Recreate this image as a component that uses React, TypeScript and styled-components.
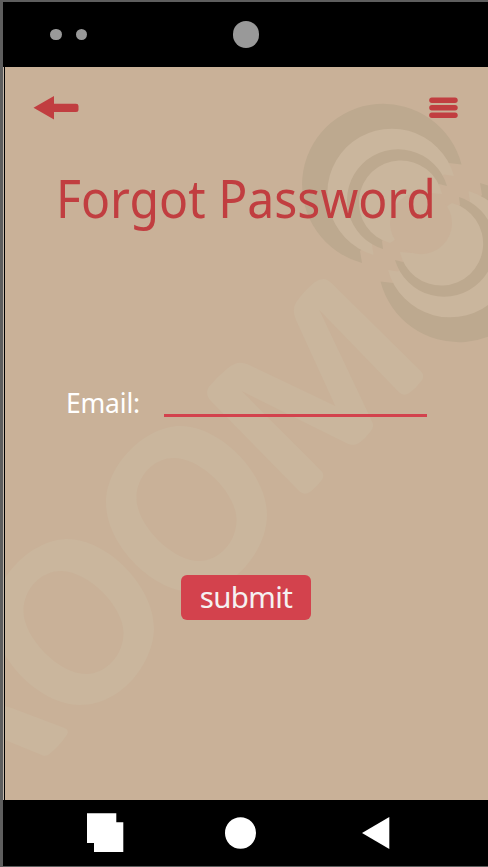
import React from "react";
import styled, { createGlobalStyle } from "styled-components";

const GlobalStyle = createGlobalStyle`
  * { box-sizing: border-box; }
  body { margin: 0; background: #5e5e5e; overflow: hidden; }
`;

const Phone = styled.div`
  width: 488px;
  height: 867px;
  padding: 2px 0 1px 3px;
  background: #5e5e5e;
  display: flex;
  flex-direction: column;
  font-family: "Noto Sans", sans-serif;
`;

const SensorBar = styled.div`
  height: 65px;
  flex: none;
  background: #000;
  display: flex;
  align-items: center;
  padding-left: 47px;
`;

const Dot = styled.span<{ $size: number; $gap: number }>`
  width: ${(p) => p.$size}px;
  height: ${(p) => p.$size}px;
  margin-right: ${(p) => p.$gap}px;
  border-radius: 50%;
  background: #999;
`;

const Screen = styled.main`
  position: relative;
  height: 733px;
  flex: none;
  margin-left: 1px;
  border-left: 1px solid #000;
  box-shadow: -1px 0 0 #c3b7aa;
  background: #c9b198;
  overflow: hidden;
  display: flex;
  flex-direction: column;
`;

const Watermark = styled.svg`
  position: absolute;
  inset: 0;
`;

const Header = styled.header`
  position: relative;
  display: flex;
  justify-content: space-between;
  padding: 28px 30px 0 28px;
  height: 102px;
`;

const IconButton = styled.button`
  border: 0;
  padding: 0;
  background: none;
  height: 26px;
  svg { display: block; }
`;

const Title = styled.h1<{ $stretch: number }>`
  position: relative;
  margin: 0 0 0 50.500px;
  height: 64px;
  font-size: 52.500px;
  line-height: 58px;
  font-weight: 400;
  color: #c13e40;
  white-space: nowrap;
  transform: scaleX(${(p) => p.$stretch});
  transform-origin: 0 0;
`;

const Form = styled.form`
  position: relative;
  display: flex;
  flex-direction: column;
  margin-top: 153px;
`;

const Field = styled.label`
  display: flex;
  align-items: flex-end;
  height: 31px;
  padding-left: 61px;
`;

const LabelText = styled.span`
  width: 98px;
  font-size: 26.5px;
  line-height: 34px;
  height: 31px;
  color: #fff;
  font-weight: 400;
  letter-spacing: -0.2px;
`;

const Input = styled.input`
  width: 262.500px;
  height: 30px;
  border: 0;
  border-bottom: 3px solid #d3424d;
  background: transparent;
  outline: 0;
  padding: 0;
`;

const Submit = styled.button`
  width: 130px;
  height: 45px;
  margin: 158px 0 0 176px;
  padding: 0 0 2px;
  border: 0;
  border-radius: 6px;
  background: #d3424d;
  color: #f5f1f1;
  font: 400 29.500px/43px "Noto Sans", sans-serif;
  letter-spacing: -0.6px;
`;

const NavBar = styled.nav`
  height: 66px;
  flex: none;
  background: #000;
  display: flex;
  align-items: center;
  padding-left: 84px;
  svg { display: block; flex: none; }
`;

const NavItem = styled.span<{ $width: number }>`
  width: ${(p) => p.$width}px;
`;

const RINGS = (
  <>
    <path fill="#bda98f" d="M461.5 164.5A81 81 0 1 0 362 263L360 251L449 163Z" />
    <path fill="#cab69d" d="M454 176A64.5 64.5 0 1 0 373.5 255L372 244L444 174.500Z" />
    <path fill="#bda98f" d="M447 186A51 51 0 1 0 383 249L382 241L439 184Z" />
    <path fill="#cab69d" d="M442 194A42 42 0 1 0 390 243L421 223L430 193Z" />
  </>
);

const LETTER_O =
  "M180 426C221 426 267 474 267 515C267 548 236 592 193 592C152 592 106 544 106 503C106 464 146 426 180 426Z" +
  "M174 458C201 458 236.500 493 236.500 520C236.500 542 219 561 199 561C172 561 136.500 525 136.500 498C136.500 476 154 458 174 458Z";

const LETTER_M =
  "M430 57Q442 57 455 70L722 333Q736 347 724 363Q708 385 688 399Q671 410 657 397L418 150L566 463L578 490Q583 502 571 515Q556 536 537 549Q519 560 500 550L185 393L424 633Q436 645 425 661Q410 681 391 695Q374 708 358 694L92 422Q74 403 86 381Q112 349 145 323Q174 300 203 313L466 438L348 180Q334 149 349 126Q372 93 402 68Q416 57 430 57Z";

const LEG_R =
  "M0 916Q20 919 35 924L192 983Q210 990 200 1006Q175 1042 147 1063Q137 1071 125 1065L0 1014Z";

const BackIcon = () => (
  <svg width="46" height="26" viewBox="0 0 46 26" fill="#c13e40">
    <path d="M0.500 12.700L21 1V8.800H43Q45.500 8.800 45.500 11V14.500Q45.500 17 43 17H21V24.500Z" />
  </svg>
);

const MenuIcon = () => (
  <svg width="29" height="26" viewBox="0 0 29 26" fill="#c13e40">
    <rect x="0.200" y="2.400" width="28.500" height="5.600" rx="2.700" />
    <rect x="0.200" y="9.900" width="28.500" height="5.600" rx="2.700" />
    <rect x="0.200" y="17.400" width="28.500" height="5.600" rx="2.700" />
  </svg>
);

export default function App() {
  return (
    <>
      <GlobalStyle />
      <Phone>
        <SensorBar>
          <Dot $size={11.5} $gap={14} />
          <Dot $size={11.5} $gap={145.5} />
          <Dot $size={26.5} $gap={0} />
        </SensorBar>
        <Screen>
          <Watermark width="483" height="733" viewBox="5 67 483 733" aria-hidden="true">
            {RINGS}
            <g transform="rotate(180 421 223)">{RINGS}</g>
            <circle cx="421" cy="223.200" r="31" fill="#c9b198" />
            <g fill="#cab69d" fillRule="evenodd">
              <path d={LETTER_O} />
              <path d={LETTER_O} transform="translate(-113 113)" />
              <path d={LETTER_M} transform="translate(180 260) scale(.33333)" />
              <path d={LEG_R} transform="translate(0 400) scale(.33333)" />
            </g>
          </Watermark>
          <Header>
            <IconButton aria-label="Back"><BackIcon /></IconButton>
            <IconButton aria-label="Menu"><MenuIcon /></IconButton>
          </Header>
          <Title $stretch={0.917}>Forgot Password</Title>
          <Form onSubmit={(e: React.FormEvent) => e.preventDefault()}>
            <Field>
              <LabelText>Email:</LabelText>
              <Input type="email" />
            </Field>
            <Submit type="submit">submit</Submit>
          </Form>
        </Screen>
        <NavBar>
          <NavItem $width={138}>
            <svg width="37" height="40" viewBox="0 0 37 40" fill="#fff">
              <path d="M0 0.300H29.300V9.300H36.300V39H7V30H0Z" />
            </svg>
          </NavItem>
          <NavItem $width={137}>
            <svg width="31" height="32" viewBox="0 0 31 32" fill="#fff">
              <ellipse cx="15.500" cy="16" rx="15.500" ry="15.800" />
            </svg>
          </NavItem>
          <NavItem $width={28}>
            <svg width="28" height="32" viewBox="0 0 28 32" fill="#fff">
              <path d="M0 16L27.300 0V32Z" />
            </svg>
          </NavItem>
        </NavBar>
      </Phone>
    </>
  );
}
